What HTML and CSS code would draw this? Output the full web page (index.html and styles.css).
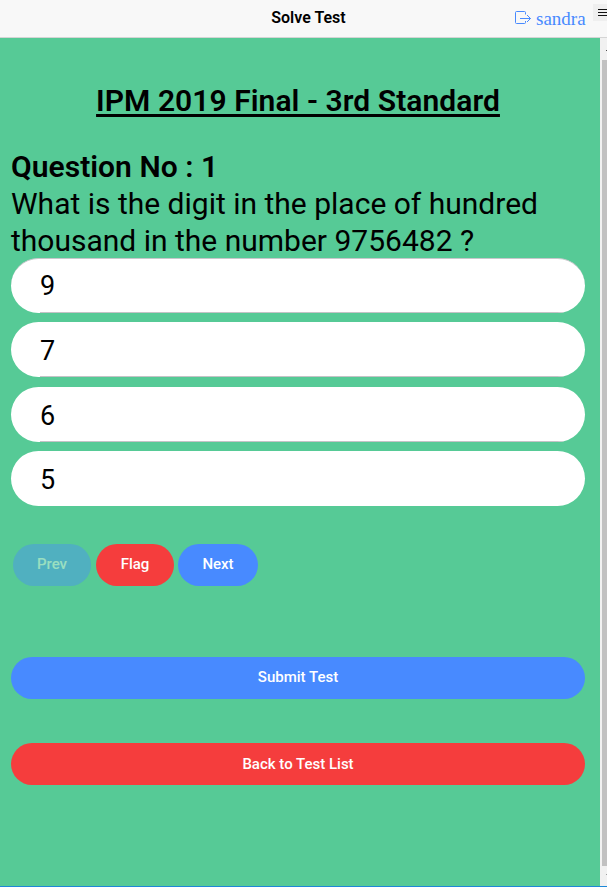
FILE: index.html
```html
<!DOCTYPE html>
<html lang="en">
<head>
<meta charset="utf-8">
<title>Solve Test</title>
<link rel="stylesheet" href="styles.css">
</head>
<body>
<header class="toolbar">
  <h1 class="toolbar-title">Solve Test</h1>
  <a class="user">
    <svg class="user-icon" width="16" height="14" viewBox="0 0 16 14" fill="none" stroke="currentColor"><path d="M10.5 3.5V1.5Q10.5.5 9.5.5H1.5Q.5.5.5 1.5V11.5Q.5 12.5 1.5 12.5H9.5Q10.5 12.5 10.5 11.5V10M5 7.5H15.5M12 4L15.5 7.5L12 11"/></svg>
    <span>sandra</span>
  </a>
  <span class="menu"><svg width="9" height="9" viewBox="0 0 9 9"><path d="M0 1.5H9M0 4.5H9M0 7.5H9" stroke="#111"/></svg></span>
</header>
<div class="viewport">
  <main class="content">
    <h2 class="test-title">IPM 2019 Final - 3rd Standard</h2>
    <div class="question"><b>Question No : 1</b><br>What is the digit in the place of hundred<br>thousand in the number 9756482 ?</div>
    <div class="answers">
      <div class="answer">9</div>
      <div class="answer">7</div>
      <div class="answer">6</div>
      <div class="answer">5</div>
    </div>
    <div class="nav">
      <button class="btn prev" disabled>Prev</button>
      <button class="btn flag">Flag</button>
      <button class="btn next">Next</button>
    </div>
    <button class="btn full submit">Submit Test</button>
    <button class="btn full back">Back to Test List</button>
  </main>
  <div class="scrollbar"><i class="arrow"></i><div class="thumb"></div><i class="arrow arrow-down"></i></div>
</div>
</body>
</html>
```
FILE: styles.css
```css
* { box-sizing: border-box; }
body {
  margin: 0;
  width: 607px;
  height: 887px;
  overflow: hidden;
  display: flex;
  flex-direction: column;
  font-family: Roboto, sans-serif;
  color: #000;
  border-bottom: 1px solid #1e88d8;
}
.toolbar {
  position: relative;
  flex: none;
  height: 38px;
  background: #f8f8f8;
  border-bottom: 1px solid #d5d5d5;
}
.toolbar-title {
  margin: 0;
  padding-left: 10px;
  text-align: center;
  font-size: 16px;
  font-weight: 600;
  line-height: 36px;
}
.user {
  position: absolute;
  left: 515px;
  top: 8px;
  display: flex;
  gap: 5px;
  color: #488aff;
  font: 19px/22px "Liberation Serif", serif;
}
.user-icon { margin-top: 3px; }
.menu {
  position: absolute;
  right: 0;
  top: 4px;
  width: 14px;
  height: 17px;
  padding: 4px 0 0 5px;
  background: #efefef;
  line-height: 0;
}
.viewport { flex: 1; display: flex; min-height: 0; }
.content {
  width: 600px;
  padding: 44px 15px 0 11px;
  background: #56ca96;
}
.test-title {
  margin: 0;
  text-align: center;
  font-size: 30px;
  font-weight: 600;
  letter-spacing: .06px;
  line-height: 37px;
  text-decoration: underline;
  text-decoration-thickness: 3px;
  text-underline-offset: 3px;
}
.question {
  margin-top: 29px;
  font-size: 30px;
  line-height: 37px;
  white-space: nowrap;
}
.question b { font-weight: 600; letter-spacing: .04px; }
.answers { margin-top: -1px; display: grid; gap: 9.4px; }
.answer {
  position: relative;
  height: 55px;
  padding-left: 29px;
  border-radius: 28px;
  background: #fff;
  font-size: 27px;
  line-height: 58px;
  overflow: hidden;
}
.answer:first-child { border-top: 1px solid #c8c7cc; line-height: 55px; }
.answer:not(:last-child)::after {
  content: "";
  position: absolute;
  left: 29px;
  right: 0;
  bottom: 0;
  height: 1px;
  background: #c4c3c6;
}
.nav { display: flex; margin: 38px 0 0 2px; }
.btn {
  display: block;
  height: 42px;
  padding: 0 0 2px;
  border: 0;
  border-radius: 21px;
  color: #fff;
  font: 500 15px Roboto, sans-serif;
}
.prev { width: 78px; background: #488aff; opacity: .4; }
.flag { width: 78px; margin-left: 5px; background: #f53d3d; }
.next { width: 80px; margin-left: 4px; background: #488aff; }
.full { width: 100%; }
.submit { margin-top: 71px; background: #488aff; }
.back { margin-top: 44px; padding: 0; background: #f53d3d; }
.scrollbar {
  flex: 1;
  padding: 12px 0 11px 2px;
  display: flex;
  flex-direction: column;
  background: #f1f1f1;
}
.thumb { flex: 1; margin: 9px 0 8px; background: #c1c1c1; }
.arrow { width: 1px; height: 1px; margin-left: 4px; background: #505050; }
.arrow-down { background: #a0a0a0; }
```
